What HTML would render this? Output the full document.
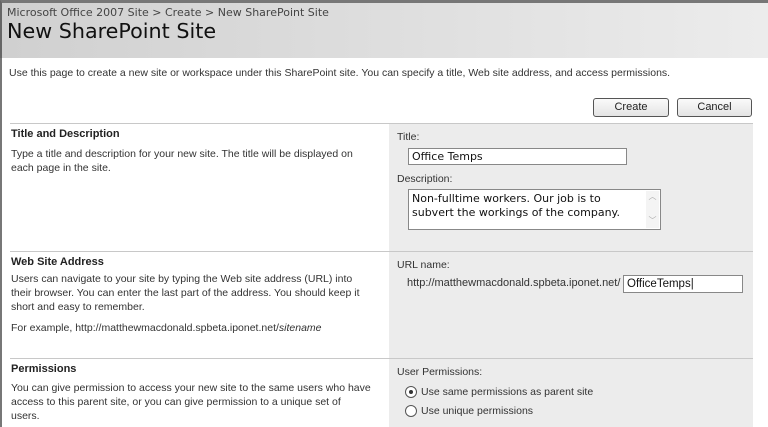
<!DOCTYPE html>
<html><head><style>
*{margin:0;padding:0;box-sizing:border-box}
body{width:768px;height:427px;overflow:hidden;background:#fff;font-family:"Liberation Sans",Tahoma,sans-serif;font-size:10.5px;color:#333;position:relative}
.a{position:absolute;white-space:nowrap}
#hdr{position:absolute;left:0;top:0;width:768px;height:58px;background:linear-gradient(90deg,#d0d0d0,#dedede 50%,#ececec);border-top:3px solid #777;border-left:2px solid #666}
#lb{position:absolute;left:0;top:58px;width:2px;height:369px;background:#777}
.btn{position:absolute;height:19px;border:1px solid #555;border-radius:3px;background:linear-gradient(#fafafa,#e4e4e4);text-align:center;line-height:17px;font-size:11px;color:#222}
.hr{position:absolute;left:10px;width:743px;height:1px;background:#c8c8c8}
#col{position:absolute;left:389px;top:124px;width:364px;height:303px;background:#ececec}
.h{font-weight:bold;color:#222;font-size:11px}
.box{position:absolute;background:#fff;border:1px solid #888;font-family:"DejaVu Sans",Verdana,sans-serif;font-size:11px;color:#111;padding-left:3px;line-height:16px}
.rad{position:absolute;width:12px;height:12px;border:1px solid #555;border-radius:50%;background:#fff}
</style></head><body>
<div id="hdr"></div><div id="lb"></div>
<div class="a" style="left:7px;top:6px;font-family:'DejaVu Sans',Verdana,sans-serif;font-size:11px;color:#444">Microsoft Office 2007 Site &gt; Create &gt; New SharePoint Site</div>
<div class="a" style="left:7px;top:19px;font-family:'DejaVu Sans',sans-serif;font-size:20.7px;color:#111">New SharePoint Site</div>
<div class="a" style="left:9px;top:67px">Use this page to create a new site or workspace under this SharePoint site. You can specify a title, Web site address, and access permissions.</div>
<div class="btn" style="left:593px;top:98px;width:76px">Create</div>
<div class="btn" style="left:677px;top:98px;width:75px">Cancel</div>
<div id="col"></div>
<div class="hr" style="top:123px"></div>
<div class="hr" style="top:251px"></div>
<div class="hr" style="top:358px"></div>
<div class="a h" style="left:11px;top:128px">Title and Description</div>
<div class="a" style="left:11px;top:147px;line-height:14px">Type a title and description for your new site. The title will be displayed on<br>each page in the site.</div>
<div class="a" style="left:397px;top:131px">Title:</div>
<div class="box" style="left:408px;top:148px;width:219px;height:17px">Office Temps</div>
<div class="a" style="left:397px;top:173px">Description:</div>
<div class="box" style="left:408px;top:189px;width:253px;height:41px;line-height:14px;padding-top:2px">Non-fulltime workers. Our job is to<br>subvert the workings of the company.
<div style="position:absolute;right:1px;top:1px;width:13px;height:37px;background:#f4f4f4;color:#aaa;font-size:8px;text-align:center;line-height:12px">︿<br><br>﹀</div></div>
<div class="a h" style="left:11px;top:256px">Web Site Address</div>
<div class="a" style="left:11px;top:272px;line-height:14px">Users can navigate to your site by typing the Web site address (URL) into<br>their browser. You can enter the last part of the address. You should keep it<br>short and easy to remember.</div>
<div class="a" style="left:11px;top:322px">For example, http://matthewmacdonald.spbeta.iponet.net/<i>sitename</i></div>
<div class="a" style="left:397px;top:259px">URL name:</div>
<div class="a" style="left:407px;top:277px;font-size:11px">http://matthewmacdonald.spbeta.iponet.net/</div>
<div class="box" style="left:623px;top:275px;width:120px;height:18px;font-family:'Liberation Sans',sans-serif;font-size:11.5px">OfficeTemps|</div>
<div class="a h" style="left:11px;top:363px">Permissions</div>
<div class="a" style="left:11px;top:381px;line-height:14px">You can give permission to access your new site to the same users who have<br>access to this parent site, or you can give permission to a unique set of<br>users.</div>
<div class="a" style="left:397px;top:366px">User Permissions:</div>
<div class="rad" style="left:405px;top:386px"><div style="position:absolute;left:3px;top:3px;width:4px;height:4px;border-radius:50%;background:#333"></div></div>
<div class="a" style="left:421px;top:386px">Use same permissions as parent site</div>
<div class="rad" style="left:405px;top:405px"></div>
<div class="a" style="left:421px;top:405px">Use unique permissions</div>
</body></html>
